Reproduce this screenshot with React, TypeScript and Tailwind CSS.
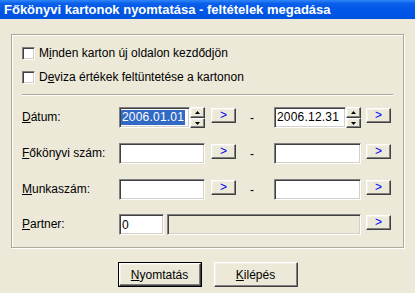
import React from "react";

const sunken =
  "border border-t-[#808080] border-l-[#808080] border-b-white border-r-white shadow-[inset_1px_1px_0_#404040,inset_-1px_-1px_0_#d4d0c8]";
const raised =
  "border border-t-white border-l-white border-b-[#404040] border-r-[#404040] shadow-[inset_-1px_-1px_0_#808080,inset_1px_1px_0_#f4f2e8] bg-[#ece9d8]";

function Checkbox({ children }: { children: React.ReactNode }) {
  return (
    <div className="flex items-center h-[13px]">
      <div className={`w-[13px] h-[13px] bg-white ${sunken}`} />
      <span className="ml-[4px] leading-[13px]">{children}</span>
    </div>
  );
}

function GoButton() {
  return (
    <div
      className={`w-[25px] h-[15px] mt-[1px] flex items-center justify-center text-[#0000ff] text-[12px] leading-none ${raised}`}
    >
      <span className="-mt-[1px]">&gt;</span>
    </div>
  );
}

function Spin() {
  return (
    <div className="w-[15px] h-[21px] flex flex-col">
      <div className={`h-[11px] flex items-center justify-center ${raised}`}>
        <svg width="5" height="3" viewBox="0 0 5 3">
          <path d="M2.5 0L5 3H0z" fill="#000" />
        </svg>
      </div>
      <div className={`h-[10px] flex items-center justify-center ${raised}`}>
        <svg width="5" height="3" viewBox="0 0 5 3">
          <path d="M0 0H5L2.5 3z" fill="#000" />
        </svg>
      </div>
    </div>
  );
}

function Label({ k, rest }: { k: string; rest: string }) {
  return (
    <div className="w-[97px] leading-[21px] h-[21px]">
      <span className="underline">{k}</span>
      {rest}
    </div>
  );
}

function Dash() {
  return <div className="w-[38px] pl-[14px] leading-[23px] h-[21px]">-</div>;
}

function Field({ w, children, disabled }: { w: string; children?: React.ReactNode; disabled?: boolean }) {
  return (
    <div className={`${w} h-[21px] ${disabled ? "bg-[#ece9d8]" : "bg-white"} ${sunken} flex items-center pl-[2px]`}>
      {children}
    </div>
  );
}

export default function App() {
  return (
    <div className="w-[415px] h-[293px] bg-[#ece9d8] overflow-hidden flex flex-col text-black text-[12px] font-['Liberation_Sans',Arial,sans-serif]">
      <div className="h-[19px] shrink-0 pl-[4px] text-white font-bold text-[13px] leading-[20px] bg-[linear-gradient(to_bottom,#2f86f8_0%,#0a60ea_18%,#0056e6_55%,#0052e0_100%)]">
        Főkönyvi kartonok nyomtatása - feltételek megadása
      </div>
      <div className="pt-[15px] pl-[11px]">
        <div className="w-[393px] h-[214px] border border-[#aca899] shadow-[inset_1px_1px_0_#fff,1px_1px_0_#fff] pl-[10px] pt-[12px] flex flex-col">
          <Checkbox>
            M<span className="underline">i</span>nden karton új oldalon kezdődjön
          </Checkbox>
          <div className="mt-[11px]">
            <Checkbox>
              D<span className="underline">e</span>viza értékek feltüntetése a kartonon
            </Checkbox>
          </div>
          <div className="mt-[10px] w-[371px] h-[2px] border-t border-t-[#aca899] border-b border-b-white" />
          <div className="mt-[11px] flex flex-col gap-[15px]">
            <div className="flex items-start">
              <Label k="D" rest="átum:" />
              <div className="flex">
                <div className={`w-[71px] h-[21px] bg-white ${sunken} flex items-center pl-[1px]`}>
                  <span className="bg-[#316ac5] text-white leading-[15px] px-[1px] tracking-[0.2px]">2006.01.01</span>
                </div>
                <Spin />
              </div>
              <div className="ml-[6px]">
                <GoButton />
              </div>
              <Dash />
              <div className="flex">
                <div className={`w-[72px] h-[21px] bg-white ${sunken} flex items-center pl-[2px]`}>
                  <span className="leading-[15px] tracking-[0.2px]">2006.12.31</span>
                </div>
                <Spin />
              </div>
              <div className="ml-[5px]">
                <GoButton />
              </div>
            </div>
            <div className="flex items-start">
              <Label k="F" rest="őkönyvi szám:" />
              <Field w="w-[86px]" />
              <div className="ml-[6px]">
                <GoButton />
              </div>
              <Dash />
              <Field w="w-[87px]" />
              <div className="ml-[5px]">
                <GoButton />
              </div>
            </div>
            <div className="flex items-start">
              <Label k="M" rest="unkaszám:" />
              <Field w="w-[86px]" />
              <div className="ml-[6px]">
                <GoButton />
              </div>
              <Dash />
              <Field w="w-[87px]" />
              <div className="ml-[5px]">
                <GoButton />
              </div>
            </div>
            <div className="flex items-start -mt-[1px]">
              <Label k="P" rest="artner:" />
              <Field w="w-[45px]">
                <span>0</span>
              </Field>
              <div className="ml-[3px]">
                <Field w="w-[194px]" disabled />
              </div>
              <div className="ml-[5px]">
                <GoButton />
              </div>
            </div>
          </div>
        </div>
      </div>
      <div className="mt-[14px] flex justify-center gap-[12px]">
        <div className="w-[84px] h-[25px] border border-black">
          <div className={`w-full h-full flex items-center justify-center ${raised}`}>
            <span>
              <span className="underline">N</span>yomtatás
            </span>
          </div>
        </div>
        <div className={`w-[84px] h-[25px] flex items-center justify-center ${raised}`}>
          <span>
            <span className="underline">K</span>ilépés
          </span>
        </div>
      </div>
    </div>
  );
}
